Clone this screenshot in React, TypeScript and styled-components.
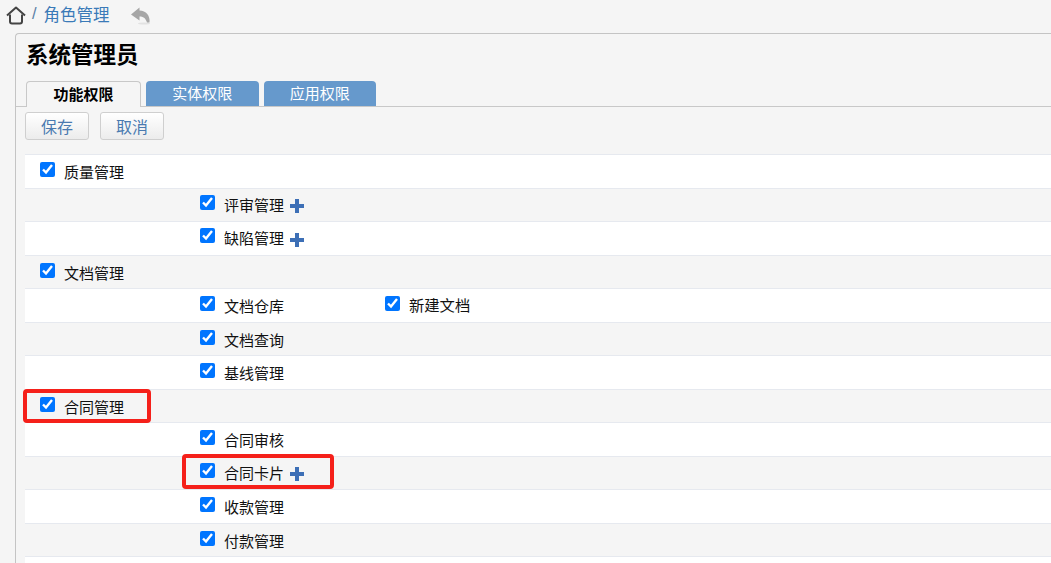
import React from 'react';
import styled, { createGlobalStyle } from 'styled-components';

const GlobalStyle = createGlobalStyle`
  html, body {
    margin: 0;
    height: 100%;
    overflow: hidden;
    background: #f5f5f5;
    font-family: "Liberation Sans", "Noto Sans CJK SC", sans-serif;
  }
`;

const Page = styled.div`
  width: 1051px;
  height: 563px;
  overflow: hidden;
  position: relative;
`;

const Breadcrumb = styled.div`
  height: 33px;
  box-sizing: border-box;
  display: flex;
  align-items: center;
  padding: 0 0 2px 6px;
  color: #3a7ab8;
  font-size: 16.5px;
`;

const HomeIcon = styled.svg`
  display: block;
  flex: none;
`;

const Slash = styled.span`
  margin: -4px 7px 0 6px;
  color: #5b7fa6;
`;

const Crumb = styled.span`
  margin-top: -4px;
`;

const BackIcon = styled.svg`
  margin-left: 20px;
  display: block;
`;

const Panel = styled.div`
  margin-left: 15px;
  border: 1px solid #c4c4c4;
  border-right: 0;
  border-bottom: 0;
  border-top-left-radius: 4px;
  height: 540px;
  box-sizing: border-box;
`;

const Title = styled.h1`
  margin: 0;
  height: 47px;
  padding: 0 0 10px 10px;
  box-sizing: border-box;
  display: flex;
  align-items: center;
  color: #000;
  font-size: 22.5px;
  font-weight: 700;
`;

const TabBar = styled.div`
  display: flex;
  gap: 5px;
  height: 25px;
  padding-left: 10px;
  border-bottom: 1px solid #c8c8c8;
`;

const Tab = styled.div<{ $active?: boolean }>`
  width: ${({ $active }) => ($active ? '115px' : '112.5px')};
  box-sizing: border-box;
  display: flex;
  align-items: center;
  justify-content: center;
  padding-bottom: 2px;
  font-size: 15px;
  font-weight: ${({ $active }) => ($active ? 700 : 400)};
  color: ${({ $active }) => ($active ? '#000' : '#fff')};
  background: ${({ $active }) => ($active ? '#f5f5f5' : '#6699cc')};
  border: ${({ $active }) => ($active ? '1px solid #c8c8c8' : '0')};
  border-bottom: 0;
  border-radius: 4px 4px 0 0;
  height: ${({ $active }) => ($active ? '26px' : '25px')};
`;

const ButtonRow = styled.div`
  display: flex;
  gap: 11px;
  padding: 5px 0 0 9px;
  height: 42px;
  box-sizing: content-box;
`;

const ActionButton = styled.button`
  width: 64px;
  height: 28px;
  padding: 0;
  border: 1px solid #cfcfcf;
  border-radius: 3px;
  background: linear-gradient(#ffffff, #ececec);
  color: #4a7ab0;
  font-family: inherit;
  font-size: 16px;
`;

const Table = styled.div`
  margin-left: 9px;
  padding-top: 0.25px;
  border-top: 1px solid #e6e9ef;
`;

const Row = styled.div<{ $striped?: boolean }>`
  height: 33.5px;
  box-sizing: border-box;
  display: flex;
  align-items: center;
  border-bottom: 1px solid #e6e9ef;
  background: ${({ $striped }) => ($striped ? '#f5f5f5' : '#fff')};
`;

const Cell = styled.label<{ $level: 'top' | 'child' | 'extra'; $raised?: boolean }>`
  display: flex;
  align-items: center;
  padding-bottom: ${({ $raised }) => ($raised ? '2px' : '0')};
  width: ${({ $level }) => ($level === 'child' ? '185px' : 'auto')};
  margin-left: ${({ $level }) =>
    $level === 'top' ? '15px' : $level === 'child' ? '175px' : '0'};
`;

const Check = styled.input`
  width: 15px;
  height: 15px;
  margin: -4px 9px 0 0;
  accent-color: #0075ff;
  flex: none;
`;

const Label = styled.span`
  color: #111;
  font-size: 15px;
  white-space: nowrap;
`;

const ExtraLabel = styled(Label)`
  margin-top: -3px;
  font-size: 15.3px;
`;

const PlusIcon = styled.svg`
  margin: 4px 0 0 6px;
  flex: none;
`;

const Marker = styled.div<{ $x: number; $y: number; $w: number; $h: number }>`
  position: absolute;
  left: ${({ $x }) => $x}px;
  top: ${({ $y }) => $y}px;
  width: ${({ $w }) => $w}px;
  height: ${({ $h }) => $h}px;
  box-sizing: border-box;
  border: 4px solid #f5201a;
  border-radius: 4px;
`;

const Plus = () => (
  <PlusIcon width="14" height="14" viewBox="0 0 14 14">
    <path d="M5 0 H9 V5 H14 V9 H9 V14 H5 V9 H0 V5 H5 Z" fill="#3d6fb6" />
  </PlusIcon>
);

type RowItem = {
  label: string;
  top?: boolean;
  plus?: boolean;
  extra?: string;
};

const rows: RowItem[] = [
  { label: '质量管理', top: true },
  { label: '评审管理', plus: true },
  { label: '缺陷管理', plus: true },
  { label: '文档管理', top: true },
  { label: '文档仓库', extra: '新建文档' },
  { label: '文档查询' },
  { label: '基线管理' },
  { label: '合同管理', top: true },
  { label: '合同审核' },
  { label: '合同卡片', plus: true },
  { label: '收款管理' },
  { label: '付款管理' },
  { label: '' },
];

export default function App() {
  return (
    <Page>
      <GlobalStyle />
      <Breadcrumb>
        <HomeIcon width="20" height="19" viewBox="0 0 20 19" fill="none" stroke="#444" strokeWidth="2">
          <path d="M1 9.5 L10 1.5 L19 9.5" strokeLinejoin="round" />
          <path d="M4 8.5 V15.5 Q4 17.5 6 17.5 H14 Q16 17.5 16 15.5 V8.5" />
        </HomeIcon>
        <Slash>/</Slash>
        <Crumb>角色管理</Crumb>
        <BackIcon width="21" height="18" viewBox="0 0 21 18">
          <ellipse cx="14" cy="16.5" rx="6" ry="1" fill="#e2e2e2" />
          <path
            d="M9.5 0.5 L1 7.5 L9.5 13.5 V9.5 C13 9.5 15.5 11 17 15.5 H19.5 C20.5 9 16 3.5 9.5 3.5 Z"
            fill="#a6a6a6"
          />
        </BackIcon>
      </Breadcrumb>
      <Panel>
        <Title>系统管理员</Title>
        <TabBar>
          <Tab $active>功能权限</Tab>
          <Tab>实体权限</Tab>
          <Tab>应用权限</Tab>
        </TabBar>
        <ButtonRow>
          <ActionButton>保存</ActionButton>
          <ActionButton>取消</ActionButton>
        </ButtonRow>
        <Table>
          {rows.map((row, i) => (
            <Row key={i} $striped={i % 2 === 1}>
              {row.label && (
                <Cell $level={row.top ? 'top' : 'child'} $raised={row.plus}>
                  <Check type="checkbox" defaultChecked />
                  <Label>{row.label}</Label>
                  {row.plus && <Plus />}
                </Cell>
              )}
              {row.extra && (
                <Cell $level="extra">
                  <Check type="checkbox" defaultChecked />
                  <ExtraLabel>{row.extra}</ExtraLabel>
                </Cell>
              )}
            </Row>
          ))}
        </Table>
      </Panel>
      <Marker $x={23} $y={389} $w={128} $h={34} />
      <Marker $x={182} $y={454} $w={152} $h={35} />
    </Page>
  );
}
